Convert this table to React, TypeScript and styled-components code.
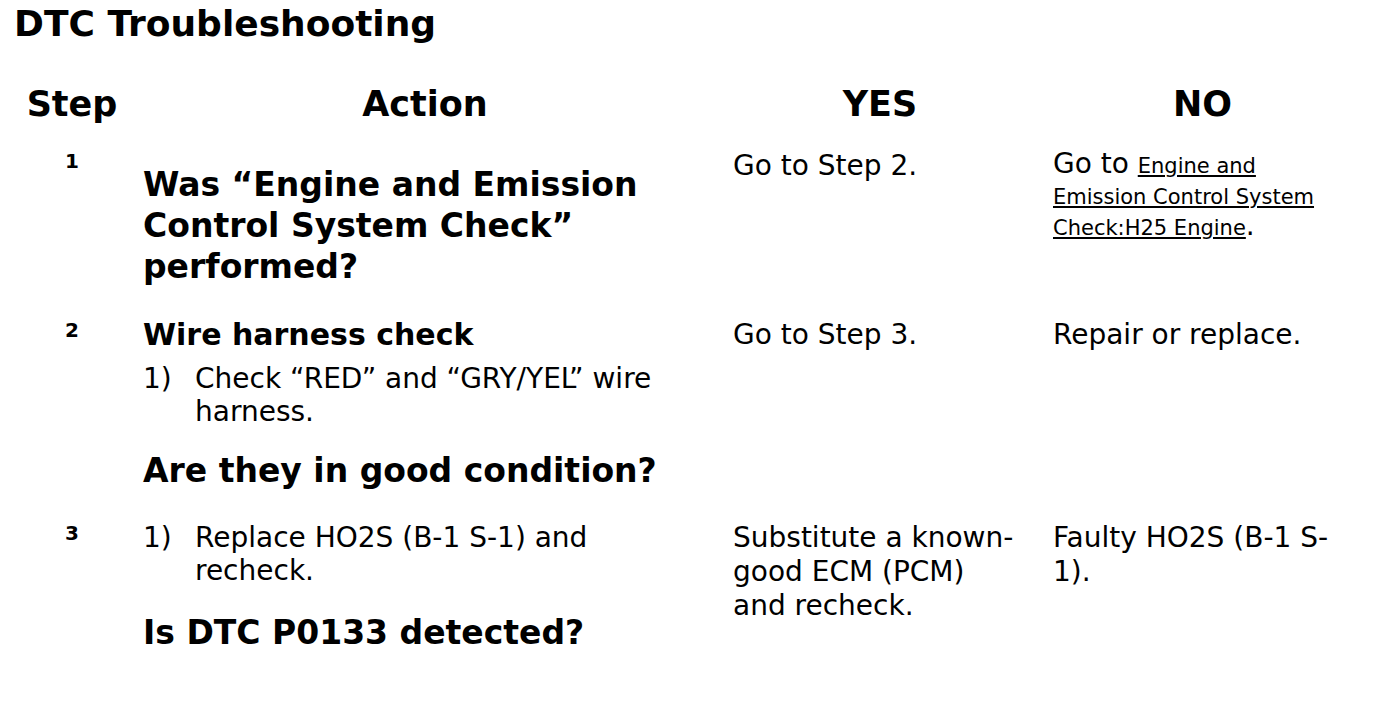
import React from "react";
import styled, { createGlobalStyle } from "styled-components";

const Global = createGlobalStyle`
  html, body { margin: 0; padding: 0; background: #fff; }
  body { font-family: "DejaVu Sans", Verdana, sans-serif; color: #000; }
`;

const Page = styled.div`
  padding: 4px 0 0 14px;
`;

const Title = styled.h1`
  margin: 0;
  font-size: 36px;
  font-weight: bold;
  line-height: 40px;
`;

const Table = styled.table`
  margin-top: 38px;
  border-collapse: collapse;
  table-layout: fixed;
  width: 1351px;
`;

const Th = styled.th`
  font-size: 35px;
  font-weight: bold;
  text-align: center;
  padding: 0;
  line-height: 44px;
  vertical-align: top;
`;

const Td = styled.td<{ $pr?: number }>`
  vertical-align: top;
  padding-left: 13px;
  padding-right: ${(p) => p.$pr ?? 10}px;
  padding-bottom: 0;
`;

const StepNum = styled.td`
  vertical-align: top;
  text-align: center;
  font-weight: bold;
  font-size: 20px;
  padding: 0;
`;

const Row = styled.tr<{ $top: number }>`
  & > td { padding-top: ${(p) => p.$top}px; }
`;

const Question = styled.div<{ $mt?: number; $size?: number; $lh?: number }>`
  font-weight: bold;
  font-size: ${(p) => p.$size ?? 33}px;
  line-height: ${(p) => p.$lh ?? 41}px;
  margin-top: ${(p) => p.$mt ?? 0}px;
`;

const Item = styled.div<{ $mt?: number }>`
  display: flex;
  font-size: 28px;
  line-height: 33px;
  margin-top: ${(p) => p.$mt ?? 0}px;
`;

const ItemNum = styled.span`
  flex: 0 0 52px;
`;

const Plain = styled.div<{ $lh?: number }>`
  font-size: 28px;
  line-height: ${(p) => p.$lh ?? 34}px;
`;

const Link = styled.a`
  color: #000;
  text-decoration: underline;
  font-size: 21px;
  line-height: 28px;
`;

export default function App() {
  return (
    <>
      <Global />
      <Page>
        <Title>DTC Troubleshooting</Title>
        <Table>
          <colgroup>
            <col style={{ width: 116 }} />
            <col style={{ width: 590 }} />
            <col style={{ width: 320 }} />
            <col style={{ width: 325 }} />
          </colgroup>
          <thead>
            <tr>
              <Th>Step</Th>
              <Th>Action</Th>
              <Th>YES</Th>
              <Th>NO</Th>
            </tr>
          </thead>
          <tbody>
            <Row $top={23}>
              <StepNum>1</StepNum>
              <Td>
                <Question $mt={15}>
                  Was “Engine and Emission Control System Check” performed?
                </Question>
              </Td>
              <Td>
                <Plain>Go to Step 2.</Plain>
              </Td>
              <Td $pr={30}>
                <Plain $lh={30}>
                  Go to <Link>Engine and Emission Control System Check:H25 Engine</Link>.
                </Plain>
              </Td>
            </Row>
            <Row $top={31}>
              <StepNum>2</StepNum>
              <Td>
                <Question $size={30} $lh={34}>Wire harness check</Question>
                <Item $mt={10}>
                  <ItemNum>1)</ItemNum>
                  <span>Check “RED” and “GRY/YEL” wire harness.</span>
                </Item>
                <Question $mt={22}>Are they in good condition?</Question>
              </Td>
              <Td>
                <Plain>Go to Step 3.</Plain>
              </Td>
              <Td>
                <Plain>Repair or replace.</Plain>
              </Td>
            </Row>
            <Row $top={30}>
              <StepNum>3</StepNum>
              <Td>
                <Item>
                  <ItemNum>1)</ItemNum>
                  <span>Replace HO2S (B-1 S-1) and recheck.</span>
                </Item>
                <Question $mt={25}>Is DTC P0133 detected?</Question>
              </Td>
              <Td $pr={22}>
                <Plain>Substitute a known-good ECM (PCM) and recheck.</Plain>
              </Td>
              <Td>
                <Plain>Faulty HO2S (B-1 S-1).</Plain>
              </Td>
            </Row>
          </tbody>
        </Table>
      </Page>
    </>
  );
}
